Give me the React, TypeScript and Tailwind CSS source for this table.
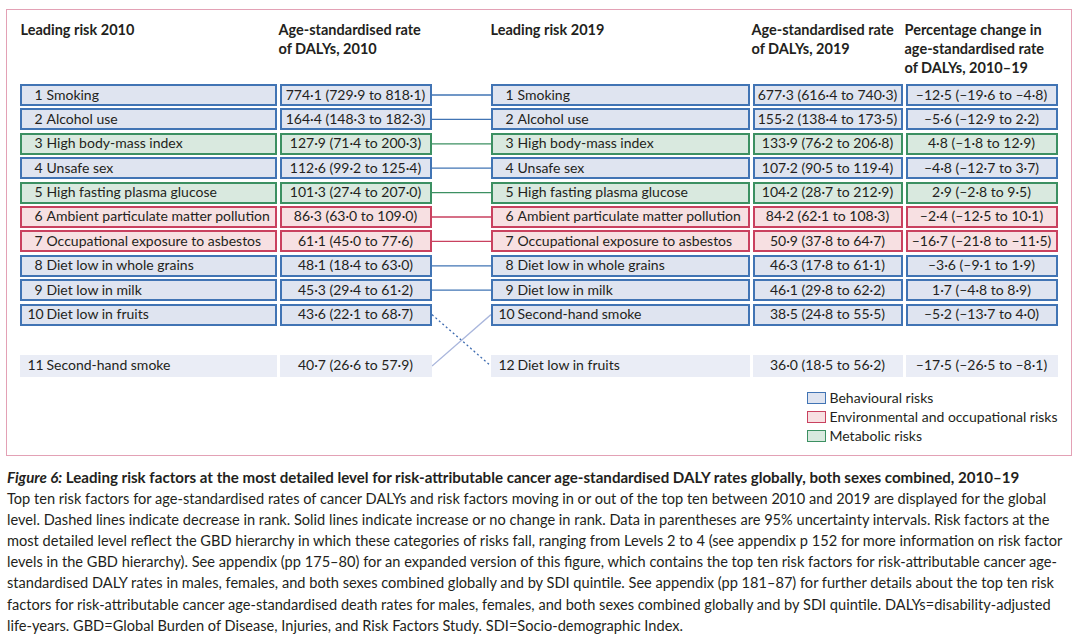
import React from "react";

type Kind = "b" | "e" | "m" | "n";

interface Row {
  rank: number;
  name: string;
  rate: string;
  kind: Kind;
  pct?: string;
}

const boxStyle: Record<Kind, string> = {
  b: "border-2 border-[#4174b4] bg-[#dfe4f0]",
  e: "border-2 border-[#c9415f] bg-[#f7e0e2]",
  m: "border-2 border-[#3c9062] bg-[#d9e9df]",
  n: "bg-[#eaedf6]",
};

const legendStyle: Record<Kind, string> = {
  b: "border-[1.5px] border-[#4174b4] bg-[#dfe4f0]",
  e: "border-[1.5px] border-[#c9415f] bg-[#f7e0e2]",
  m: "border-[1.5px] border-[#3c9062] bg-[#d9e9df]",
  n: "bg-[#eaedf6]",
};

const left: Row[] = [
  { rank: 1, name: "Smoking", rate: "774·1 (729·9 to 818·1)", kind: "b" },
  { rank: 2, name: "Alcohol use", rate: "164·4 (148·3 to 182·3)", kind: "b" },
  { rank: 3, name: "High body-mass index", rate: "127·9 (71·4 to 200·3)", kind: "m" },
  { rank: 4, name: "Unsafe sex", rate: "112·6 (99·2 to 125·4)", kind: "b" },
  { rank: 5, name: "High fasting plasma glucose", rate: "101·3 (27·4 to 207·0)", kind: "m" },
  { rank: 6, name: "Ambient particulate matter pollution", rate: "86·3 (63·0 to 109·0)", kind: "e" },
  { rank: 7, name: "Occupational exposure to asbestos", rate: "61·1 (45·0 to 77·6)", kind: "e" },
  { rank: 8, name: "Diet low in whole grains", rate: "48·1 (18·4 to 63·0)", kind: "b" },
  { rank: 9, name: "Diet low in milk", rate: "45·3 (29·4 to 61·2)", kind: "b" },
  { rank: 10, name: "Diet low in fruits", rate: "43·6 (22·1 to 68·7)", kind: "b" },
];

const leftExtra: Row = { rank: 11, name: "Second-hand smoke", rate: "40·7 (26·6 to 57·9)", kind: "n" };

const right: Row[] = [
  { rank: 1, name: "Smoking", rate: "677·3 (616·4 to 740·3)", pct: "–12·5 (–19·6 to –4·8)", kind: "b" },
  { rank: 2, name: "Alcohol use", rate: "155·2 (138·4 to 173·5)", pct: "–5·6 (–12·9 to 2·2)", kind: "b" },
  { rank: 3, name: "High body-mass index", rate: "133·9 (76·2 to 206·8)", pct: "4·8 (–1·8 to 12·9)", kind: "m" },
  { rank: 4, name: "Unsafe sex", rate: "107·2 (90·5 to 119·4)", pct: "–4·8 (–12·7 to 3·7)", kind: "b" },
  { rank: 5, name: "High fasting plasma glucose", rate: "104·2 (28·7 to 212·9)", pct: "2·9 (–2·8 to 9·5)", kind: "m" },
  { rank: 6, name: "Ambient particulate matter pollution", rate: "84·2 (62·1 to 108·3)", pct: "–2·4 (–12·5 to 10·1)", kind: "e" },
  { rank: 7, name: "Occupational exposure to asbestos", rate: "50·9 (37·8 to 64·7)", pct: "–16·7 (–21·8 to –11·5)", kind: "e" },
  { rank: 8, name: "Diet low in whole grains", rate: "46·3 (17·8 to 61·1)", pct: "–3·6 (–9·1 to 1·9)", kind: "b" },
  { rank: 9, name: "Diet low in milk", rate: "46·1 (29·8 to 62·2)", pct: "1·7 (–4·8 to 8·9)", kind: "b" },
  { rank: 10, name: "Second-hand smoke", rate: "38·5 (24·8 to 55·5)", pct: "–5·2 (–13·7 to 4·0)", kind: "b" },
];

const rightExtra: Row = { rank: 12, name: "Diet low in fruits", rate: "36·0 (18·5 to 56·2)", pct: "–17·5 (–26·5 to –8·1)", kind: "n" };

const lineColor: Record<Kind, string> = {
  b: "#4174b4",
  e: "#c9415f",
  m: "#3c9062",
  n: "#a9b6dc",
};

const NameCell = ({ row, width }: { row: Row; width: string }) => (
  <div className={`${width} h-[22px] flex items-center pb-[2px] ${row.kind === "n" ? "pl-[8px]" : "pl-[6px]"} ${boxStyle[row.kind]}`}>
    <span className="w-[15px] text-right">{row.rank}</span>
    <span className="ml-[4px] whitespace-nowrap">{row.name}</span>
  </div>
);

const ValueCell = ({ text, kind, width }: { text: string; kind: Kind; width: string }) => (
  <div className={`${width} h-[22px] flex items-center justify-center pb-[2px] whitespace-nowrap ${boxStyle[kind]}`}>
    {text}
  </div>
);

// connector lines between the two rankings
const Connectors = () => {
  const cy = (i: number) => 11 + i * 24.4;
  const extraY = 282;
  return (
    <svg width="59" height="293" viewBox="0 0 59 293" className="shrink-0">
      {left.slice(0, 9).map((r, i) => (
        <line key={i} x1="0" y1={cy(i)} x2="59" y2={cy(i)} stroke={lineColor[r.kind]} strokeWidth="1.3" />
      ))}
      <line x1="0" y1={cy(9)} x2="59" y2={extraY} stroke="#3f6cb0" strokeWidth="1.3" strokeDasharray="2 2.6" />
      <line x1="0" y1={extraY} x2="59" y2={cy(9)} stroke="#a9b6dc" strokeWidth="1.3" />
    </svg>
  );
};

const Legend = ({ kind, label }: { kind: Kind; label: string }) => (
  <div className="flex items-center h-[19px]">
    <span className={`w-[19px] h-[12px] ${legendStyle[kind]}`} />
    <span className="ml-[4px]">{label}</span>
  </div>
);

export default function App() {
  return (
    <div className="w-[1080px] h-[636px] bg-white text-[#231f20] overflow-hidden" style={{ fontFamily: "Lato, 'Noto Sans', sans-serif" }}>
      <div className="ml-[6px] mt-[9px] w-[1066px] h-[447px] border-[1.5px] border-[#e3a1b5] pl-[12.5px] pt-[10px] text-[14px]">
        <div className="flex font-bold text-[14.5px] leading-[19px] h-[57px]">
          <div className="w-[260px] pl-[1px]">Leading risk 2010</div>
          <div className="w-[211px] -ml-[1px]">Age-standardised rate<br />of DALYs, 2010</div>
          <div className="w-[262px] pl-[1px]">Leading risk 2019</div>
          <div className="w-[153px]">Age-standardised rate<br />of DALYs, 2019</div>
          <div className="w-[152px] whitespace-nowrap">Percentage change in<br />age-standardised rate<br />of DALYs, 2010–19</div>
        </div>
        <div className="flex mt-[7px]">
          <div className="flex flex-col">
            <div className="flex flex-col gap-[2.4px]">
              {left.map((r) => (
                <div key={r.rank} className="flex gap-[3px]">
                  <NameCell row={r} width="w-[257px]" />
                  <ValueCell text={r.rate} kind={r.kind} width="w-[152px]" />
                </div>
              ))}
            </div>
            <div className="flex gap-[3px] mt-[29.4px]">
              <NameCell row={leftExtra} width="w-[257px]" />
              <ValueCell text={leftExtra.rate} kind="n" width="w-[152px]" />
            </div>
          </div>
          <Connectors />
          <div className="flex flex-col">
            <div className="flex flex-col gap-[2.4px]">
              {right.map((r) => (
                <div key={r.rank} className="flex gap-[3px]">
                  <NameCell row={r} width="w-[259px]" />
                  <ValueCell text={r.rate} kind={r.kind} width="w-[150px]" />
                  <ValueCell text={r.pct ?? ""} kind={r.kind} width="w-[152px]" />
                </div>
              ))}
            </div>
            <div className="flex gap-[3px] mt-[29.4px]">
              <NameCell row={rightExtra} width="w-[259px]" />
              <ValueCell text={rightExtra.rate} kind="n" width="w-[150px]" />
              <ValueCell text={rightExtra.pct ?? ""} kind="n" width="w-[152px]" />
            </div>
          </div>
        </div>
        <div className="ml-[787px] mt-[11px] flex flex-col">
          <Legend kind="b" label="Behavioural risks" />
          <Legend kind="e" label="Environmental and occupational risks" />
          <Legend kind="m" label="Metabolic risks" />
        </div>
      </div>
      <div className="ml-[7px] mt-[11px] text-[14.6px] leading-[21.1px] whitespace-nowrap">
        <div className="font-bold text-[15.1px]">
          <i>Figure 6:</i> Leading risk factors at the most detailed level for risk-attributable cancer age-standardised DALY rates globally, both sexes combined, 2010–19
        </div>
        <div>
          Top ten risk factors for age-standardised rates of cancer DALYs and risk factors moving in or out of the top ten between 2010 and 2019 are displayed for the global<br />
          level. Dashed lines indicate decrease in rank. Solid lines indicate increase or no change in rank. Data in parentheses are 95% uncertainty intervals. Risk factors at the<br />
          most detailed level reflect the GBD hierarchy in which these categories of risks fall, ranging from Levels 2 to 4 (see appendix p 152 for more information on risk factor<br />
          levels in the GBD hierarchy). See appendix (pp 175–80) for an expanded version of this figure, which contains the top ten risk factors for risk-attributable cancer age-<br />
          standardised DALY rates in males, females, and both sexes combined globally and by SDI quintile. See appendix (pp 181–87) for further details about the top ten risk<br />
          factors for risk-attributable cancer age-standardised death rates for males, females, and both sexes combined globally and by SDI quintile. DALYs=disability-adjusted<br />
          life-years. GBD=Global Burden of Disease, Injuries, and Risk Factors Study. SDI=Socio-demographic Index.
        </div>
      </div>
    </div>
  );
}
